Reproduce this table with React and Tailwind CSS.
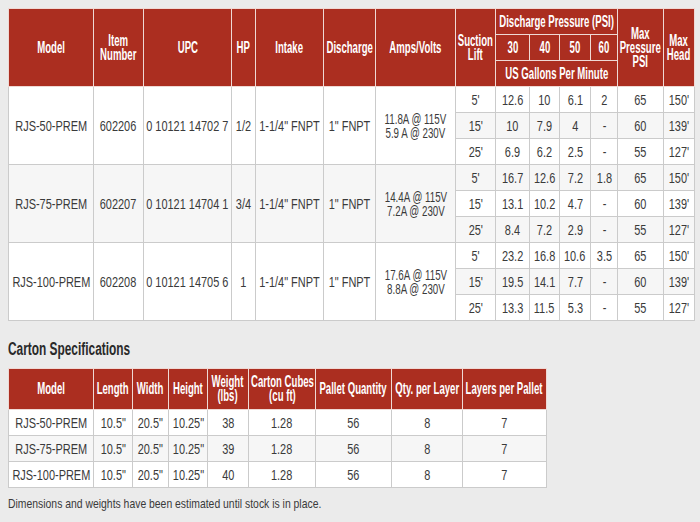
import React from "react";

const FONT = "font-['Liberation_Sans','Arial',sans-serif]";

const hb = "border border-[#efd9d5] bg-[#ab2e20] text-white font-bold text-[16px] leading-[14px] text-center align-middle p-0 overflow-visible";
const td = "border border-[#cbcbcb] text-center align-middle p-0 text-[15px] leading-[13px] text-[#3a3a3a] overflow-visible";

function H({ children }) {
  return (
    <div className="flex justify-center">
      <span className="inline-block whitespace-nowrap scale-x-[0.6]">{children}</span>
    </div>
  );
}

function D({ children, narrow }) {
  return (
    <div className="flex justify-center">
      <span className={`inline-block whitespace-nowrap ${narrow ? "scale-x-[0.65] leading-[14px]" : "scale-x-[0.73]"}`}>{children}</span>
    </div>
  );
}

const groups = [
  {
    model: "RJS-50-PREM", item: "602206", upc: "0 10121 14702 7", hp: "1/2",
    amps: ["11.8A @ 115V", "5.9 A @ 230V"],
    rows: [
      ["5'", "12.6", "10", "6.1", "2", "65", "150'"],
      ["15'", "10", "7.9", "4", "-", "60", "139'"],
      ["25'", "6.9", "6.2", "2.5", "-", "55", "127'"],
    ],
  },
  {
    model: "RJS-75-PREM", item: "602207", upc: "0 10121 14704 1", hp: "3/4",
    amps: ["14.4A @ 115V", "7.2A @ 230V"],
    rows: [
      ["5'", "16.7", "12.6", "7.2", "1.8", "65", "150'"],
      ["15'", "13.1", "10.2", "4.7", "-", "60", "139'"],
      ["25'", "8.4", "7.2", "2.9", "-", "55", "127'"],
    ],
  },
  {
    model: "RJS-100-PREM", item: "602208", upc: "0 10121 14705 6", hp: "1",
    amps: ["17.6A @ 115V", "8.8A @ 230V"],
    rows: [
      ["5'", "23.2", "16.8", "10.6", "3.5", "65", "150'"],
      ["15'", "19.5", "14.1", "7.7", "-", "60", "139'"],
      ["25'", "13.3", "11.5", "5.3", "-", "55", "127'"],
    ],
  },
];

const mainCols = [85, 50, 88, 24, 68, 52, 80, 40, 34, 30, 31, 27, 46, 31];
const cartonCols = [85, 39, 36, 39, 41, 67, 76, 71, 84];

const carton = [
  ["RJS-50-PREM", "10.5\"", "20.5\"", "10.25\"", "38", "1.28", "56", "8", "7"],
  ["RJS-75-PREM", "10.5\"", "20.5\"", "10.25\"", "39", "1.28", "56", "8", "7"],
  ["RJS-100-PREM", "10.5\"", "20.5\"", "10.25\"", "40", "1.28", "56", "8", "7"],
];

export default function App() {
  let rowIndex = 0;
  return (
    <div className={`w-[700px] h-[522px] bg-[#ebebeb] pt-[8px] pl-[8px] ${FONT}`}>
      <table className="border-collapse table-fixed w-[686px]">
        <colgroup>
          {mainCols.map((w, i) => (
            <col key={i} style={{ width: w }} />
          ))}
        </colgroup>
        <thead>
          <tr className="h-[26px]">
            <th rowSpan={3} className={hb}><H>Model</H></th>
            <th rowSpan={3} className={hb}><H>Item<br />Number</H></th>
            <th rowSpan={3} className={hb}><H>UPC</H></th>
            <th rowSpan={3} className={hb}><H>HP</H></th>
            <th rowSpan={3} className={hb}><H>Intake</H></th>
            <th rowSpan={3} className={hb}><H>Discharge</H></th>
            <th rowSpan={3} className={hb}><H>Amps/Volts</H></th>
            <th rowSpan={3} className={hb}><H>Suction<br />Lift</H></th>
            <th colSpan={4} className={hb}><H>Discharge Pressure (PSI)</H></th>
            <th rowSpan={3} className={hb}><H>Max<br />Pressure<br />PSI</H></th>
            <th rowSpan={3} className={hb}><H>Max<br />Head</H></th>
          </tr>
          <tr className="h-[26px]">
            <th className={hb}><H>30</H></th>
            <th className={hb}><H>40</H></th>
            <th className={hb}><H>50</H></th>
            <th className={hb}><H>60</H></th>
          </tr>
          <tr className="h-[26px]">
            <th colSpan={4} className={hb}><H>US Gallons Per Minute</H></th>
          </tr>
        </thead>
        <tbody>
          {groups.map((g) =>
            g.rows.map((r, i) => {
              rowIndex += 1;
              const bg = rowIndex % 2 === 0 ? "bg-[#f6f6f6]" : "bg-white";
              return (
                <tr key={g.model + i} className={`h-[26px] ${bg}`}>
                  {i === 0 && (
                    <>
                      <td rowSpan={3} className={td}><D>{g.model}</D></td>
                      <td rowSpan={3} className={td}><D>{g.item}</D></td>
                      <td rowSpan={3} className={td}><D>{g.upc}</D></td>
                      <td rowSpan={3} className={td}><D>{g.hp}</D></td>
                      <td rowSpan={3} className={td}><D>1-1/4" FNPT</D></td>
                      <td rowSpan={3} className={td}><D>1" FNPT</D></td>
                      <td rowSpan={3} className={td}>
                        <D narrow>
                          {g.amps[0]}
                          <br />
                          {g.amps[1]}
                        </D>
                      </td>
                    </>
                  )}
                  {r.map((c, j) => (
                    <td key={j} className={td}><D>{c}</D></td>
                  ))}
                </tr>
              );
            })
          )}
        </tbody>
      </table>

      <div className="pt-[18px] text-[18px] leading-[21px] font-bold text-[#2a2a2a]">
        <span className="inline-block whitespace-nowrap origin-left scale-x-[0.66]">Carton Specifications</span>
      </div>

      <table className="mt-[8px] border-collapse table-fixed w-[538px]">
        <colgroup>
          {cartonCols.map((w, i) => (
            <col key={i} style={{ width: w }} />
          ))}
        </colgroup>
        <thead>
          <tr className="h-[41px]">
            <th className={hb}><H>Model</H></th>
            <th className={hb}><H>Length</H></th>
            <th className={hb}><H>Width</H></th>
            <th className={hb}><H>Height</H></th>
            <th className={hb}><H>Weight<br />(lbs)</H></th>
            <th className={hb}><H>Carton Cubes<br />(cu ft)</H></th>
            <th className={hb}><H>Pallet Quantity</H></th>
            <th className={hb}><H>Qty. per Layer</H></th>
            <th className={hb}><H>Layers per Pallet</H></th>
          </tr>
        </thead>
        <tbody>
          {carton.map((r, i) => (
            <tr key={i} className={`h-[26px] ${i % 2 === 1 ? "bg-[#f6f6f6]" : "bg-white"}`}>
              {r.map((c, j) => (
                <td key={j} className={td}><D>{c}</D></td>
              ))}
            </tr>
          ))}
        </tbody>
      </table>

      <div className="mt-[8px] text-[13px] leading-[16px] text-[#3a3a3a]">
        <span className="inline-block whitespace-nowrap origin-left scale-x-[0.80]">
          Dimensions and weights have been estimated until stock is in place.
        </span>
      </div>
    </div>
  );
}
